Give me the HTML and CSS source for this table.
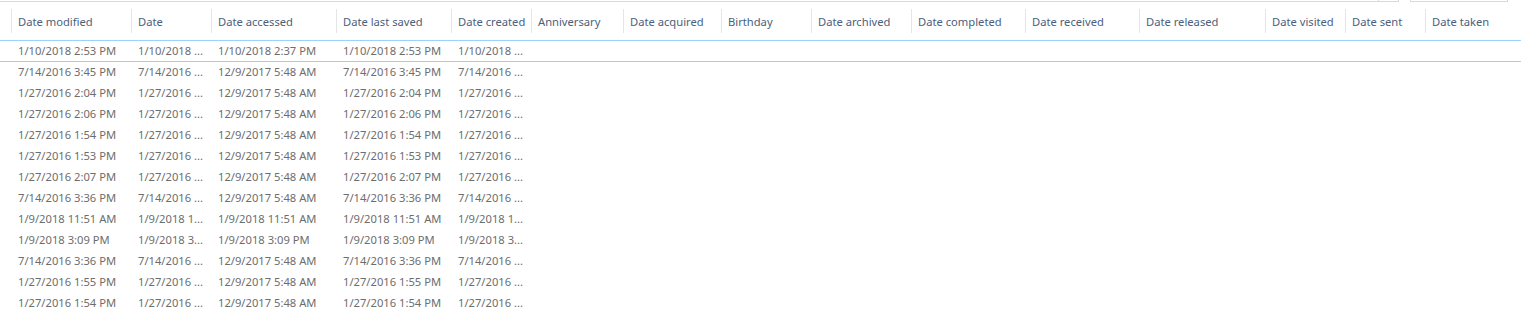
FILE: index.html
```html
<!DOCTYPE html>
<html>
<head>
<meta charset="utf-8">
<link rel="stylesheet" href="styles.css">
</head>
<body>
<div class="topbar">
  <div class="address"><div class="addr-btn"></div></div>
  <div class="search"></div>
</div>
<div class="grid">
  <div class="row head">
    <div class="lead"></div>
    <div class="c w1">Date modified</div>
    <div class="c w2">Date</div>
    <div class="c w3">Date accessed</div>
    <div class="c w4">Date last saved</div>
    <div class="c w5">Date created</div>
    <div class="c w6">Anniversary</div>
    <div class="c w7">Date acquired</div>
    <div class="c w8">Birthday</div>
    <div class="c w9">Date archived</div>
    <div class="c w10">Date completed</div>
    <div class="c w11">Date received</div>
    <div class="c w12">Date released</div>
    <div class="c w13">Date visited</div>
    <div class="c w14">Date sent</div>
    <div class="c w15">Date taken</div>
  </div>
  <div class="row item focus">
    <div class="lead"></div>
    <div class="c w1">1/10/2018 2:53 PM</div><div class="c w2">1/10/2018 ...</div><div class="c w3">1/10/2018 2:37 PM</div><div class="c w4">1/10/2018 2:53 PM</div><div class="c w5">1/10/2018 ...</div>
  </div>
  <div class="row item">
    <div class="lead"></div>
    <div class="c w1">7/14/2016 3:45 PM</div><div class="c w2">7/14/2016 ...</div><div class="c w3">12/9/2017 5:48 AM</div><div class="c w4">7/14/2016 3:45 PM</div><div class="c w5">7/14/2016 ...</div>
  </div>
  <div class="row item">
    <div class="lead"></div>
    <div class="c w1">1/27/2016 2:04 PM</div><div class="c w2">1/27/2016 ...</div><div class="c w3">12/9/2017 5:48 AM</div><div class="c w4">1/27/2016 2:04 PM</div><div class="c w5">1/27/2016 ...</div>
  </div>
  <div class="row item">
    <div class="lead"></div>
    <div class="c w1">1/27/2016 2:06 PM</div><div class="c w2">1/27/2016 ...</div><div class="c w3">12/9/2017 5:48 AM</div><div class="c w4">1/27/2016 2:06 PM</div><div class="c w5">1/27/2016 ...</div>
  </div>
  <div class="row item">
    <div class="lead"></div>
    <div class="c w1">1/27/2016 1:54 PM</div><div class="c w2">1/27/2016 ...</div><div class="c w3">12/9/2017 5:48 AM</div><div class="c w4">1/27/2016 1:54 PM</div><div class="c w5">1/27/2016 ...</div>
  </div>
  <div class="row item">
    <div class="lead"></div>
    <div class="c w1">1/27/2016 1:53 PM</div><div class="c w2">1/27/2016 ...</div><div class="c w3">12/9/2017 5:48 AM</div><div class="c w4">1/27/2016 1:53 PM</div><div class="c w5">1/27/2016 ...</div>
  </div>
  <div class="row item">
    <div class="lead"></div>
    <div class="c w1">1/27/2016 2:07 PM</div><div class="c w2">1/27/2016 ...</div><div class="c w3">12/9/2017 5:48 AM</div><div class="c w4">1/27/2016 2:07 PM</div><div class="c w5">1/27/2016 ...</div>
  </div>
  <div class="row item">
    <div class="lead"></div>
    <div class="c w1">7/14/2016 3:36 PM</div><div class="c w2">7/14/2016 ...</div><div class="c w3">12/9/2017 5:48 AM</div><div class="c w4">7/14/2016 3:36 PM</div><div class="c w5">7/14/2016 ...</div>
  </div>
  <div class="row item">
    <div class="lead"></div>
    <div class="c w1">1/9/2018 11:51 AM</div><div class="c w2">1/9/2018 1...</div><div class="c w3">1/9/2018 11:51 AM</div><div class="c w4">1/9/2018 11:51 AM</div><div class="c w5">1/9/2018 1...</div>
  </div>
  <div class="row item">
    <div class="lead"></div>
    <div class="c w1">1/9/2018 3:09 PM</div><div class="c w2">1/9/2018 3...</div><div class="c w3">1/9/2018 3:09 PM</div><div class="c w4">1/9/2018 3:09 PM</div><div class="c w5">1/9/2018 3...</div>
  </div>
  <div class="row item">
    <div class="lead"></div>
    <div class="c w1">7/14/2016 3:36 PM</div><div class="c w2">7/14/2016 ...</div><div class="c w3">12/9/2017 5:48 AM</div><div class="c w4">7/14/2016 3:36 PM</div><div class="c w5">7/14/2016 ...</div>
  </div>
  <div class="row item">
    <div class="lead"></div>
    <div class="c w1">1/27/2016 1:55 PM</div><div class="c w2">1/27/2016 ...</div><div class="c w3">12/9/2017 5:48 AM</div><div class="c w4">1/27/2016 1:55 PM</div><div class="c w5">1/27/2016 ...</div>
  </div>
  <div class="row item">
    <div class="lead"></div>
    <div class="c w1">1/27/2016 1:54 PM</div><div class="c w2">1/27/2016 ...</div><div class="c w3">12/9/2017 5:48 AM</div><div class="c w4">1/27/2016 1:54 PM</div><div class="c w5">1/27/2016 ...</div>
  </div>
</div>
</body>
</html>
```
FILE: styles.css
```css
html, body {
  margin: 0;
  padding: 0;
  background: #ffffff;
}
body {
  font-family: "Noto Sans", "Open Sans", sans-serif;
  font-size: 11.2px;
  overflow: hidden;
}
.topbar {
  display: flex;
  height: 2px;
}
.address {
  width: 1399px;
  height: 1px;
  border-bottom: 1px solid #d9d9d9;
  display: flex;
  justify-content: flex-end;
}
.addr-btn {
  width: 19px;
  height: 1px;
  border-left: 1px solid #d9d9d9;
  border-right: 1px solid #d9d9d9;
}
.search {
  margin-left: 11px;
  width: 96px;
  height: 1px;
  border: 1px solid #d9d9d9;
  border-top: 0;
}
.row {
  display: flex;
  white-space: nowrap;
}
.head {
  height: 38px;
  box-sizing: border-box;
  padding-top: 7px;
  align-items: flex-start;
  color: #4c607a;
}
.head .c, .head .lead {
  height: 24px;
  line-height: 25px;
  border-right: 1px solid #e5e5e5;
}
.head .w15 { border-right: 0; }
.lead { width: 11px; flex: none; }
.c {
  flex: none;
  padding-left: 6px;
  box-sizing: border-box;
  overflow: hidden;
}
.item {
  height: 21px;
  line-height: 19px;
  color: #6d6d6d;
}
.item .lead, .item .c { border-right: 1px solid transparent; }
.focus {
  height: 22px;
  box-sizing: border-box;
  border-top: 1px solid #99d1ff;
  border-bottom: 1px solid #99d1ff;
  line-height: 20px;
}
.w1 { width: 120px; }
.w2 { width: 80px; }
.w3 { width: 125px; }
.w4 { width: 115px; }
.w5 { width: 80px; }
.w6 { width: 92px; }
.w7 { width: 98px; }
.w8 { width: 90px; }
.w9 { width: 100px; }
.w10 { width: 114px; }
.w11 { width: 114px; }
.w12 { width: 126px; }
.w13 { width: 80px; }
.w14 { width: 80px; }
.w15 { width: 80px; }
```
